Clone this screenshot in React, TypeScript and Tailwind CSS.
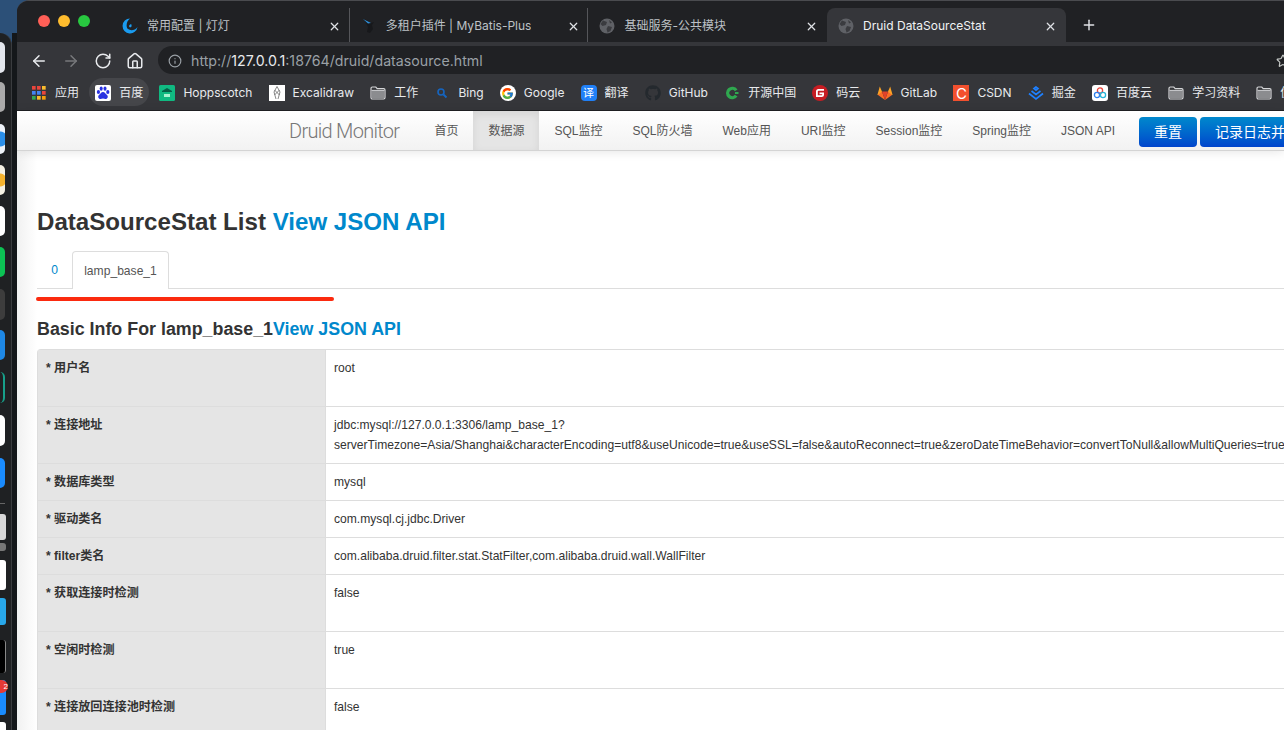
import { ArrowLeft, ArrowRight, Home, Info, Plus, RotateCw, Star, X } from "lucide-react";
import type { ReactNode } from "react";
import { FcGoogle } from "react-icons/fc";
import { FaGithub } from "react-icons/fa";

const Folder = () => (
  <svg width="16" height="16" viewBox="0 0 16 16" className="shrink-0">
    <path d="M1 3.500C1 2.700 1.600 2 2.400 2h3.400l1.400 1.600h6.400c.8 0 1.400.6 1.400 1.400v7.600c0 .8-.6 1.400-1.400 1.400H2.400C1.600 14 1 13.400 1 12.600z" fill="none" stroke="#d5d6d8" strokeWidth="1.200" />
    <path d="M1.600 5.400h12.800" stroke="#d5d6d8" strokeWidth="1" />
    <rect x="2" y="6" width="12" height="7.400" fill="#8b8c8f" />
  </svg>
);

const Globe = () => (
  <svg width="16" height="16" viewBox="0 0 16 16" className="shrink-0">
    <circle cx="8" cy="8" r="7.500" fill="#5f6166" />
    <path d="M4 2.500 8 4 7 7 3.500 8 1.500 6zM9 8l4 1-1.500 4-3 1.500-1-3.500zM10 2l3 2.500-2 1z" fill="#3a3b3f" />
  </svg>
);

const bookmarks: { icon: ReactNode; label: string; active?: boolean }[] = [
  {
    label: "应用",
    icon: (
      <span className="mr-px grid h-[14px] w-[14px] shrink-0 grid-cols-3 gap-[1.500px]">
        {["#e8453c", "#e8453c", "#f9bb2d", "#4285f4", "#4285f4", "#e8453c", "#34a853", "#f9bb2d", "#f59e0b"].map((c, i) => (
          <svg key={i} viewBox="0 0 4 4"><rect width="4" height="4" fill={c} /></svg>
        ))}
      </span>
    ),
  },
  {
    label: "百度",
    active: true,
    icon: (
      <svg width="16" height="16" viewBox="0 0 16 16" className="shrink-0">
        <rect width="16" height="16" rx="2" fill="#fff" />
        <g fill="#2932e1">
          <ellipse cx="3.400" cy="7" rx="1.600" ry="2" />
          <ellipse cx="6.200" cy="3.600" rx="1.500" ry="2.200" />
          <ellipse cx="10" cy="3.600" rx="1.500" ry="2.200" />
          <ellipse cx="12.800" cy="7" rx="1.600" ry="2" />
          <path d="M8 7c2 0 2.500 2 4 3 1.500 1.200.8 4-1.500 4-1 0-1.500-.4-2.500-.4S6.500 14 5.500 14C3.200 14 2.500 11.200 4 10c1.500-1 2-3 4-3z" />
        </g>
      </svg>
    ),
  },
  {
    label: "Hoppscotch",
    icon: (
      <svg width="16" height="16" viewBox="0 0 16 16" className="shrink-0">
        <rect width="16" height="16" rx="1.500" fill="#10b981" />
        <path d="M3 6 8 3l5 3v1H3z" fill="#065f46" />
        <rect x="5" y="9" width="6" height="3" fill="#a7f3d0" />
      </svg>
    ),
  },
  {
    label: "Excalidraw",
    icon: (
      <svg width="16" height="16" viewBox="0 0 16 16" className="shrink-0">
        <rect width="16" height="16" fill="#fff" />
        <path d="M8 1.500 5 7l2 7M8 1.500 11 7l-2 7M5.500 5l5 5M10.500 5l-5 5" fill="none" stroke="#555" strokeWidth=".7" />
      </svg>
    ),
  },
  { label: "工作", icon: <Folder /> },
  {
    label: "Bing",
    icon: (
      <svg width="16" height="16" viewBox="0 0 16 16" className="shrink-0">
        <circle cx="7" cy="7" r="3" fill="none" stroke="#1565c0" strokeWidth="1.600" />
        <path d="m9.500 9.500 3 3" stroke="#1565c0" strokeWidth="1.800" />
      </svg>
    ),
  },
  {
    label: "Google",
    icon: (
      <span className="flex h-4 w-4 shrink-0 items-center justify-center rounded-full bg-white">
        <FcGoogle size={13} />
      </span>
    ),
  },
  {
    label: "翻译",
    icon: <span className="flex h-4 w-4 shrink-0 items-center justify-center rounded-sm bg-[#2080f7] text-[11px] leading-none text-white">译</span>,
  },
  { label: "GitHub", icon: <FaGithub size={16} className="shrink-0 text-[#24292e]" /> },
  {
    label: "开源中国",
    icon: (
      <svg width="16" height="16" viewBox="0 0 16 16" className="shrink-0">
        <path d="M13.500 4.500A6.300 6.300 0 1 0 13.500 11.500L10.800 9.800a3 3 0 1 1 0-3.600z" fill="#2fa84f" />
        <rect x="11" y="7" width="3.500" height="2" fill="#2fa84f" />
      </svg>
    ),
  },
  {
    label: "码云",
    icon: (
      <svg width="16" height="16" viewBox="0 0 16 16" className="shrink-0">
        <circle cx="8" cy="8" r="8" fill="#c71d23" />
        <path d="M12 4H6.500A2.500 2.500 0 0 0 4 6.500V12h5.500A2.500 2.500 0 0 0 12 9.500V7.500H7.500v1.800h2.700v.4c0 .4-.3.6-.7.6H5.800V6.500c0-.4.3-.7.7-.7H12z" fill="#fff" />
      </svg>
    ),
  },
  {
    label: "GitLab",
    icon: (
      <svg width="16" height="16" viewBox="0 0 16 16" className="shrink-0">
        <path d="m8 15-7-5 1-3.500h3z" fill="#fc6d26" />
        <path d="m8 15 7-5-1-3.500h-3z" fill="#fc6d26" />
        <path d="m8 15-3-8.500h6z" fill="#e24329" />
        <path d="m1 10-.6 0L2.800 1.500 5 6.500z" fill="#fca326" />
        <path d="m15 10 .6 0L13.200 1.500 11 6.500z" fill="#fca326" />
      </svg>
    ),
  },
  {
    label: "CSDN",
    icon: <span className="flex h-4 w-4 shrink-0 items-center justify-center bg-[#f2502e] text-[15px] leading-none text-white">C</span>,
  },
  {
    label: "掘金",
    icon: (
      <svg width="16" height="16" viewBox="0 0 16 16" className="shrink-0">
        <path d="m8 2-2 1.600L8 5.200l2-1.600zM3.500 6 8 9.500 12.500 6M1 8.500 8 14l7-5.500" fill="none" stroke="#1e80ff" strokeWidth="1.700" />
      </svg>
    ),
  },
  {
    label: "百度云",
    icon: (
      <svg width="16" height="16" viewBox="0 0 16 16" className="shrink-0">
        <rect width="16" height="16" rx="3" fill="#fff" />
        <circle cx="8" cy="5.500" r="2.600" fill="none" stroke="#e8453c" strokeWidth="1.300" />
        <circle cx="5" cy="10" r="2.600" fill="none" stroke="#2f80ed" strokeWidth="1.300" />
        <circle cx="11" cy="10" r="2.600" fill="none" stroke="#27b4d8" strokeWidth="1.300" />
      </svg>
    ),
  },
  { label: "学习资料", icon: <Folder /> },
  { label: "优秀", icon: <Folder /> },
];

const tabs: { icon: ReactNode; title: string; active?: boolean }[] = [
  {
    title: "常用配置 | 灯灯",
    icon: (
      <svg width="16" height="16" viewBox="0 0 16 16" className="shrink-0">
        <path d="M8 .5a7.500 7.500 0 1 0 7.500 8.500C13 12.500 8.500 13 6 11 3.500 9 4.500 3 8 .5z" fill="#1a9bef" />
        <path d="M9 6c.8 1 .8 2.500 0 3.200-1 .4-2-.2-2-1.200 0-.8 1-1.500 2-2z" fill="#1a9bef" />
      </svg>
    ),
  },
  {
    title: "多租户插件 | MyBatis-Plus",
    icon: (
      <svg width="16" height="16" viewBox="0 0 16 16" className="shrink-0">
        <path d="M3 1 10 5l3-1-2 3 1 4-3 4-3-1 1-5z" fill="#17181b" />
        <path d="m2 1 5 2.500L10 5 7 5.500z" fill="#2f8fd8" />
      </svg>
    ),
  },
  { title: "基础服务-公共模块", icon: <Globe /> },
  { title: "Druid DataSourceStat", icon: <Globe />, active: true },
];

const navItems = ["首页", "数据源", "SQL监控", "SQL防火墙", "Web应用", "URI监控", "Session监控", "Spring监控", "JSON API"];

const rows: { label: string; lines: string[] }[] = [
  { label: "* 用户名", lines: ["root", "\u00a0"] },
  {
    label: "* 连接地址",
    lines: [
      "jdbc:mysql://127.0.0.1:3306/lamp_base_1?",
      "serverTimezone=Asia/Shanghai&characterEncoding=utf8&useUnicode=true&useSSL=false&autoReconnect=true&zeroDateTimeBehavior=convertToNull&allowMultiQueries=true&nullCatalogMeansCurrent=true",
    ],
  },
  { label: "* 数据库类型", lines: ["mysql"] },
  { label: "* 驱动类名", lines: ["com.mysql.cj.jdbc.Driver"] },
  { label: "* filter类名", lines: ["com.alibaba.druid.filter.stat.StatFilter,com.alibaba.druid.wall.WallFilter"] },
  { label: "* 获取连接时检测", lines: ["false", "\u00a0"] },
  { label: "* 空闲时检测", lines: ["true", "\u00a0"] },
  { label: "* 连接放回连接池时检测", lines: ["false", "\u00a0"] },
];

function Dock() {
  const items = [
    { h: "h-[31px]", c: "bg-[#e3e6ec]", m: "mt-[8px]" },
    { h: "h-[30px]", c: "bg-[#a9a9a9]", m: "mt-[9px]" },
    { h: "h-[30px]", c: "bg-[radial-gradient(circle_at_0_50%,#2b8fe8_7px,#eef3f8_8px)]", m: "mt-[12px]" },
    { h: "h-[30px]", c: "bg-[radial-gradient(circle_at_0_50%,#f5b32e_6px,#f5f1e4_7px)]", m: "mt-[11px]" },
    { h: "h-[30px]", c: "bg-white", m: "mt-[11px]" },
    { h: "h-[30px]", c: "bg-[#0cc254]", m: "mt-[11px]" },
    { h: "h-[31px]", c: "bg-[#3d3d3d]", m: "mt-[12px]" },
    { h: "h-[30px]", c: "bg-[#1e88e5]", m: "mt-[10px]" },
    { h: "h-[31px]", c: "border-r-2 border-[#17a08a]", m: "mt-[12px]" },
    { h: "h-[31px]", c: "bg-white", m: "mt-[12px]" },
    { h: "h-[30px]", c: "bg-[#1a8cff]", m: "mt-[12px]" },
  ];
  const lower = [
    { h: "h-[26px]", c: "bg-[#d8d8d8]", m: "mt-[10px]" },
    { h: "h-[8px]", c: "bg-[#777]", m: "mt-[3px]" },
    { h: "h-[30px]", c: "bg-white", m: "mt-[9px]" },
    { h: "h-[27px]", c: "bg-[#28a8ea]", m: "mt-[8px]" },
    { h: "h-[33px]", c: "bg-black border-r border-[#888]", m: "mt-[15px]" },
    { h: "h-[35px]", c: "bg-[#1a8cff]", m: "mt-[7px]" },
    { h: "h-[20px]", c: "bg-white", m: "mt-[7px]" },
  ];
  return (
    <aside className="relative h-full w-[17px] shrink-0 overflow-hidden bg-[#2c5078]">
      <div className="mt-[33px] h-full w-[12px] rounded-tr-xl border-r border-[#3a3c3f] bg-[#1f2123] pt-px">
        {items.map((d, i) => (
          <div key={i} className={`${d.m} ${d.h} ${d.c} w-[5px] rounded-r-md`} />
        ))}
        <div className="mt-[15px] h-px w-[5px] bg-[#666]" />
        {lower.map((d, i) => (
          <div key={i} className={`${d.m} ${d.h} ${d.c} w-[6px] rounded-r-[3px]`} />
        ))}
      </div>
      <div className="absolute bottom-0 right-0 top-[33px] w-[5px] bg-[#14171a]" />
      <div className="absolute left-0 top-[680px] flex h-[13px] w-[8px] items-center justify-end rounded-r-full bg-[#e53935] text-[8px] leading-none text-white">2</div>
    </aside>
  );
}

function TabStrip() {
  return (
    <div className="flex h-[41px] shrink-0 items-end bg-[#202124] pl-[94px]">
      {tabs.map((t, i) => (
        <div
          key={t.title}
          className={`relative flex h-[34px] w-[238.700px] shrink-0 items-center pl-[11px] pt-[2px] text-[12px] ${
            t.active ? "rounded-t-lg bg-[#35363a] text-[#f1f3f4]" : "text-[#bdc1c6]"
          } ${i < 2 ? "border-r border-[#55565a]" : ""}`}
        >
          {t.icon}
          <span className="ml-[9px] truncate font-['Inter','Noto_Sans_CJK_SC',sans-serif]">{t.title}</span>
          <X size={13} strokeWidth={2.200} className="absolute left-[217px] text-[#dfe1e5]" />
        </div>
      ))}
      <div className="ml-[15px] flex h-[34px] items-center">
        <Plus size={16} strokeWidth={2.200} className="text-[#dfe1e5]" />
      </div>
    </div>
  );
}

function Toolbar() {
  return (
    <div className="flex h-[32px] shrink-0 items-start bg-[#35363a] pl-[13px]">
      <div className="flex items-center gap-[14px] pt-[10px] text-[#e8eaed]">
        <ArrowLeft size={18} strokeWidth={2} />
        <ArrowRight size={18} strokeWidth={2} className="text-[#77787b]" />
        <RotateCw size={18} strokeWidth={2} />
        <Home size={18} strokeWidth={2} />
      </div>
      <div className="ml-[14px] mt-[4px] flex h-[28px] flex-1 items-center rounded-l-full bg-[#202124] pl-[10px] pt-[2px]">
        <Info size={14} className="text-[#9aa0a6]" />
        <span className="ml-[9px] font-['Inter',sans-serif] text-[14.200px] text-[#9aa0a6]">
          http://<span className="text-[#e8eaed]">127.0.0.1</span>:18764/druid/datasource.html
        </span>
        <Star size={14} className="ml-auto mr-[-6px] text-[#c4c7c5]" />
      </div>
    </div>
  );
}

function BookmarkBar() {
  return (
    <div className="flex h-[37px] shrink-0 items-start gap-[4.200px] overflow-hidden border-b border-[#202124] bg-[#35363a] pl-[9px] pt-[4px]">
      {bookmarks.map((b) => (
        <div
          key={b.label}
          className={`flex h-[28px] shrink-0 items-center gap-2 rounded-full px-[6px] pt-[2px] font-['Inter','Noto_Sans_CJK_SC',sans-serif] text-[12px] text-[#e8eaed] ${
            b.active ? "bg-[#45464a]" : ""
          }`}
        >
          {b.icon}
          <span>{b.label}</span>
        </div>
      ))}
    </div>
  );
}

function Navbar() {
  return (
    <header className="relative z-10 flex h-[40px] shrink-0 items-stretch whitespace-nowrap border-b border-[#d4d4d4] bg-gradient-to-b from-white to-[#f2f2f2] pl-[272px] shadow-[0_1px_10px_rgba(0,0,0,0.1)]">
      <a className="mr-[20px] flex shrink-0 items-center font-['Roboto',sans-serif] text-[20px] font-light tracking-[-0.7px] text-[#777]">Druid Monitor</a>
      <nav className="flex shrink-0 items-stretch">
        {navItems.map((item) => (
          <a
            key={item}
            className={`flex items-center px-[15px] text-[12px] text-[#555] ${
              item === "数据源" ? "bg-[#e5e5e5] shadow-[inset_0_3px_8px_rgba(0,0,0,0.08)]" : ""
            }`}
          >
            {item}
          </a>
        ))}
      </nav>
      <div className="ml-[9px] flex shrink-0 items-start gap-[3px] pt-[6px]">
        <button className="h-[30px] w-[58px] rounded bg-gradient-to-b from-[#0088cc] to-[#0044cc] text-[14px] text-white">重置</button>
        <button className="h-[30px] w-[140px] shrink-0 rounded bg-gradient-to-b from-[#0088cc] to-[#0044cc] px-[15px] text-left text-[14px] text-white">记录日志并重置</button>
      </div>
    </header>
  );
}

function Content() {
  return (
    <main className="relative flex-1 overflow-hidden bg-gradient-to-r from-[#f1f1f1] to-white to-[20px] pl-[20px] text-[12.100px] leading-5 text-[#333]">
      <h1 className="mt-[53px] whitespace-nowrap text-[24.100px] font-bold leading-[36px]">
        DataSourceStat List <a className="text-[#0088cc]">View JSON API</a>
      </h1>
      <div className="mt-[11px] flex h-[38px] w-[1300px] items-stretch border-b border-[#ddd]">
        <a className="flex w-[35px] items-center justify-center text-[#0088cc]">0</a>
        <a className="mb-[-1px] flex w-[97px] items-center justify-center rounded-t border border-b-0 border-[#ddd] bg-white text-[#555]">lamp_base_1</a>
      </div>
      <div className="absolute left-[19px] top-[146px] h-[4px] w-[298px] rounded-full bg-[#fb2a0f]" />
      <h3 className="mt-[25px] whitespace-nowrap text-[17.850px] font-bold leading-[30px]">
        Basic Info For lamp_base_1<a className="text-[#0088cc]">View JSON API</a>
      </h3>
      <table className="mt-[5px] w-[1300px] table-fixed border-separate border-spacing-0 rounded-tl border-l border-t border-[#ddd]">
        <colgroup>
          <col className="w-[287px]" />
          <col />
        </colgroup>
        <tbody>
          {rows.map((r, i) => (
            <tr key={r.label}>
              <th className={`bg-[#e5e5e5] p-2 text-left align-top font-bold ${i > 0 ? "border-t border-[#ddd]" : ""}`}>{r.label}</th>
              <td className={`whitespace-nowrap border-l border-[#ddd] p-2 align-top ${i > 0 ? "border-t" : ""}`}>
                {r.lines.map((l, j) => (
                  <div key={j}>{l}</div>
                ))}
              </td>
            </tr>
          ))}
        </tbody>
      </table>
    </main>
  );
}

export default function App() {
  return (
    <div className="flex h-[730px] w-[1284px] overflow-hidden bg-[#2c5078] font-['Liberation_Sans','Noto_Sans_CJK_SC',sans-serif]">
      <Dock />
      <div className="flex min-w-0 flex-1 flex-col overflow-hidden rounded-tl-xl border-t border-[#4a4b4f] bg-[#202124]">
        <div className="relative shrink-0">
          <TabStrip />
          <div className="absolute left-[21px] top-[14px] flex gap-[8px]">
            <span className="h-3 w-3 rounded-full bg-[#ff5f57]" />
            <span className="h-3 w-3 rounded-full bg-[#febc2e]" />
            <span className="h-3 w-3 rounded-full bg-[#28c840]" />
          </div>
        </div>
        <Toolbar />
        <BookmarkBar />
        <Navbar />
        <Content />
      </div>
    </div>
  );
}
